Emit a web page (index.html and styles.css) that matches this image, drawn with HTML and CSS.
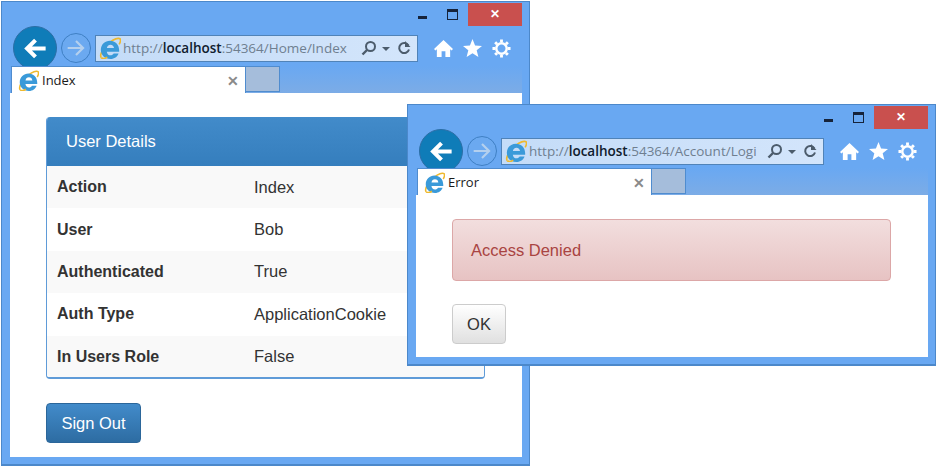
FILE: index.html
```html
<!DOCTYPE html>
<html lang="en">
<head>
    <meta charset="UTF-8">
    <title>Access Denied</title>
    <link rel="stylesheet" href="styles.css">
</head>
<body>
    <svg class="defs" width="0" height="0">
        <symbol id="ie" viewBox="0 0 24 24">
            <path d="M2.500 22.500C-.5 19 8 7.500 15 3.500 19.500 1 23.500.5 23.500 3.500c0 1.500-.6 3-1.500 4.500" fill="none" stroke="#eeb92e" stroke-width="1.800"/>
            <path d="M2 14C2 8 6.500 4 12 4s10 4 10 10.500V16H8.500c.4 2.600 1.800 4 4 4 1.600 0 2.800-.7 3.500-2h5.300c-1.200 3.500-4.500 6-8.800 6C6.500 24 2 20 2 14zM8.600 12h7.800c-.3-2.200-1.700-3.600-3.900-3.600S8.900 9.800 8.600 12z" fill="#3a9ad9"/>
            <path d="M2.500 22.500c1.500 1.500 4.500.8 6.500-.5" fill="none" stroke="#eeb92e" stroke-width="1.800"/>
        </symbol>
        <symbol id="arrow" viewBox="0 0 24 24">
            <path d="M21 12H5M12 4.500L4.500 12l7.500 7.500" fill="none" stroke="currentColor" stroke-width="3.600"/>
        </symbol>
        <symbol id="arrow-thin" viewBox="0 0 24 24">
            <path d="M22 12H4M12 3.500L3.500 12l8.500 8.500" fill="none" stroke="currentColor" stroke-width="2.600"/>
        </symbol>
        <symbol id="search" viewBox="0 0 16 16">
            <circle cx="9.500" cy="6.500" r="4.500" fill="none" stroke="currentColor" stroke-width="2"/>
            <path d="M6 10l-4.500 4.500" stroke="currentColor" stroke-width="2.400"/>
        </symbol>
        <symbol id="refresh" viewBox="0 0 16 16">
            <path d="M12.500 5.500A5 5 0 1 0 13 9.500" fill="none" stroke="currentColor" stroke-width="2"/>
            <path d="M9 1v6h5.500z" fill="currentColor"/>
        </symbol>
        <symbol id="home" viewBox="0 0 20 20">
            <path d="M10 1L0 10.500 1.500 12 3 10.700V19h5v-6h4v6h5v-8.300l1.500 1.300 1.500-1.500z" fill="#fff"/>
        </symbol>
        <symbol id="star" viewBox="0 0 20 20">
            <path d="M10 0l2.700 6.800 7.300.5-5.600 4.600 1.800 7.100L10 15.100l-6.200 3.900 1.800-7.100L0 7.300l7.300-.5z" fill="#fff"/>
        </symbol>
        <symbol id="gear" viewBox="0 0 20 20">
            <circle cx="10" cy="10" r="5.500" fill="none" stroke="#fff" stroke-width="2.600"/>
            <path d="M10 .5v19M.5 10h19M3.300 3.300l13.400 13.400M16.700 3.300L3.300 16.700" stroke="#fff" stroke-width="3" stroke-dasharray="3 13"/>
        </symbol>
    </svg>

    <div class="window window-main">
        <div class="titlebar">
            <span class="btn-min"></span>
            <span class="btn-max"></span>
            <span class="btn-close">&#10005;</span>
        </div>
        <div class="toolbar">
            <span class="nav-back"><svg class="icon-back"><use href="#arrow"/></svg></span>
            <span class="nav-forward"><svg class="icon-forward"><use href="#arrow-thin"/></svg></span>
            <div class="address">
                <svg class="icon-ie"><use href="#ie"/></svg>
                <span class="url">http://<b>localhost</b>:54364/Home/Index</span>
                <svg class="icon-search"><use href="#search"/></svg>
                <span class="caret"></span>
                <svg class="icon-refresh"><use href="#refresh"/></svg>
            </div>
            <div class="tools">
                <svg class="tool"><use href="#home"/></svg>
                <svg class="tool"><use href="#star"/></svg>
                <svg class="tool"><use href="#gear"/></svg>
            </div>
        </div>
        <div class="tabs">
            <div class="tab">
                <svg class="icon-ie-tab"><use href="#ie"/></svg>
                <span class="tab-title">Index</span>
                <span class="tab-close">&#10005;</span>
            </div>
            <div class="tab-new"></div>
        </div>
        <div class="content">
            <div class="panel">
                <div class="panel-heading">User Details</div>
                <div class="row"><b>Action</b><span>Index</span></div>
                <div class="row"><b>User</b><span>Bob</span></div>
                <div class="row"><b>Authenticated</b><span>True</span></div>
                <div class="row"><b>Auth Type</b><span>ApplicationCookie</span></div>
                <div class="row"><b>In Users Role</b><span>False</span></div>
            </div>
            <button class="btn btn-primary">Sign Out</button>
        </div>
    </div>

    <div class="window window-error">
        <div class="titlebar">
            <span class="btn-min"></span>
            <span class="btn-max"></span>
            <span class="btn-close">&#10005;</span>
        </div>
        <div class="toolbar">
            <span class="nav-back"><svg class="icon-back"><use href="#arrow"/></svg></span>
            <span class="nav-forward"><svg class="icon-forward"><use href="#arrow-thin"/></svg></span>
            <div class="address">
                <svg class="icon-ie"><use href="#ie"/></svg>
                <span class="url">http://<b>localhost</b>:54364/Account/Logi</span>
                <svg class="icon-search"><use href="#search"/></svg>
                <span class="caret"></span>
                <svg class="icon-refresh"><use href="#refresh"/></svg>
            </div>
            <div class="tools">
                <svg class="tool"><use href="#home"/></svg>
                <svg class="tool"><use href="#star"/></svg>
                <svg class="tool"><use href="#gear"/></svg>
            </div>
        </div>
        <div class="tabs">
            <div class="tab">
                <svg class="icon-ie-tab"><use href="#ie"/></svg>
                <span class="tab-title">Error</span>
                <span class="tab-close">&#10005;</span>
            </div>
            <div class="tab-new"></div>
        </div>
        <div class="content">
            <div class="alert">Access Denied</div>
            <button class="btn btn-default">OK</button>
        </div>
    </div>
</body>
</html>
```

FILE: styles.css
```css
body {
    margin: 0;
    width: 937px;
    height: 467px;
    overflow: hidden;
    position: relative;
    background-color: #fff;
    font-family: "Liberation Sans", Arial, sans-serif;
}

.defs {
    position: absolute;
}

.window {
    position: absolute;
    box-sizing: border-box;
    width: 529px;
    display: flex;
    flex-direction: column;
    padding: 0 7px 7px 8px;
    background-color: #69a8f2;
    border: 1px solid #4c88ca;
    border-bottom-width: 2px;
}

.window-main {
    left: 1px;
    top: 1px;
    height: 465px;
}

.window-error {
    left: 407px;
    top: 104px;
    height: 262px;
}

.window-error .tabs {
    margin-top: 3px;
}

.titlebar {
    display: flex;
    justify-content: flex-end;
    align-items: flex-start;
    height: 32px;
}

.btn-min {
    width: 9px;
    height: 3px;
    margin: 14px 20px 0 0;
    background-color: #16233a;
}

.btn-max {
    box-sizing: border-box;
    width: 11px;
    height: 11px;
    margin: 7px 10px 0 0;
    border: 1px solid #16233a;
    border-top-width: 3px;
}

.btn-close {
    width: 54px;
    height: 23px;
    margin-top: 1px;
    background-color: #c9504e;
    color: #fff;
    font-size: 12px;
    font-weight: bold;
    line-height: 23px;
    text-align: center;
}

.toolbar {
    display: flex;
    align-items: center;
    height: 28px;
    flex: none;
}

.nav-back {
    flex: none;
    box-sizing: border-box;
    width: 44px;
    height: 44px;
    margin: 0 4px 0 3px;
    display: flex;
    align-items: center;
    justify-content: center;
    border-radius: 50%;
    background-color: #0f7cb8;
    border: 1px solid #2b6ea6;
    color: #fff;
}

.icon-back {
    width: 27px;
    height: 27px;
}

.nav-forward {
    flex: none;
    box-sizing: border-box;
    width: 30px;
    height: 30px;
    margin-right: 4px;
    display: flex;
    align-items: center;
    justify-content: center;
    border-radius: 50%;
    background-color: #6ba9f0;
    border: 1px solid #3f80c4;
    color: #b4d0ee;
}

.icon-forward {
    width: 20px;
    height: 20px;
    transform: scaleX(-1);
}

.address {
    flex: none;
    box-sizing: border-box;
    width: 323px;
    height: 27px;
    display: flex;
    align-items: center;
    padding: 0 5px 0 3px;
    background: linear-gradient(90deg, #c4dcf8, #d3e5fb);
    border: 1px solid #5083b8;
    font-family: "Open Sans", sans-serif;
    font-size: 13.5px;
    color: #6f7f90;
}

.icon-ie {
    flex: none;
    width: 22px;
    height: 22px;
    margin-right: 2px;
}

.url {
    flex: 1;
    white-space: nowrap;
    overflow: hidden;
}

.url b {
    font-weight: 600;
    color: #10202e;
}

.icon-search,
.icon-refresh {
    flex: none;
    width: 16px;
    height: 16px;
    color: #4c5c6c;
}

.caret {
    flex: none;
    margin: 2px 6px 0 5px;
    border-top: 4px solid #4c5c6c;
    border-left: 4px solid transparent;
    border-right: 4px solid transparent;
}

.tools {
    display: flex;
    gap: 10px;
    margin-left: 16px;
}

.tool {
    width: 19px;
    height: 19px;
}

.tabs {
    display: flex;
    align-items: stretch;
    flex: none;
    height: 27px;
    margin-top: 4px;
    margin-left: 1px;
    background: linear-gradient(180deg, #69a8f2, #7cace6);
}

.tab {
    box-sizing: border-box;
    width: 235px;
    height: 27px;
    display: flex;
    align-items: center;
    padding: 0 6px;
    background-color: #fff;
    border: 1px solid #4f8ccf;
    border-bottom: none;
    font-family: "Open Sans", sans-serif;
    font-size: 13px;
    color: #1a1a1a;
}

.icon-ie-tab {
    flex: none;
    width: 21px;
    height: 21px;
    margin-right: 3px;
}

.tab-title {
    flex: 1;
}

.tab-close {
    color: #8a8a8a;
    font-size: 14px;
    font-weight: bold;
}

.tab-new {
    box-sizing: border-box;
    width: 34px;
    height: 26px;
    background-color: #a5bddb;
    border: 1px solid #4f8ccf;
    border-left: none;
}

.content {
    flex: 1;
    min-height: 0;
    padding: 24px 0 0 36px;
    background-color: #fff;
}

.panel {
    box-sizing: border-box;
    width: 439px;
    height: 262px;
    border: 1px solid #5f9bd8;
    border-width: 0 1px 2px;
    border-radius: 4px;
    overflow: hidden;
    color: #333;
    font-size: 16.5px;
}

.panel-heading {
    height: 49px;
    padding-left: 20px;
    margin: 0 -1px;
    background: linear-gradient(180deg, #428bca, #357ebd);
    color: #fff;
    line-height: 49px;
}

.row {
    box-sizing: border-box;
    display: flex;
    align-items: center;
    height: 42.4px;
    padding: 0 0 0 10px;
}

.row:nth-child(even) {
    background-color: #f9f9f9;
}

.row b {
    width: 197px;
    flex: none;
    font-size: 16px;
}

.btn {
    display: block;
    box-sizing: border-box;
    height: 40px;
    border-radius: 4px;
    font-family: "Liberation Sans", Arial, sans-serif;
    font-size: 16.5px;
    padding: 0;
}

.btn-primary {
    width: 95px;
    margin-top: 24px;
    color: #fff;
    background: linear-gradient(180deg, #428bca, #2d6ca2);
    border: 1px solid #2b669a;
}

.btn-default {
    width: 54px;
    margin-top: 23px;
    color: #333;
    background: linear-gradient(180deg, #fff, #e0e0e0);
    border: 1px solid #ccc;
}

.alert {
    box-sizing: border-box;
    width: 439px;
    height: 62px;
    padding-left: 18px;
    border: 1px solid #dca7a7;
    border-radius: 4px;
    background: linear-gradient(180deg, #f2dede, #e7c3c3);
    color: #a94442;
    font-size: 16.5px;
    line-height: 60px;
}
```
